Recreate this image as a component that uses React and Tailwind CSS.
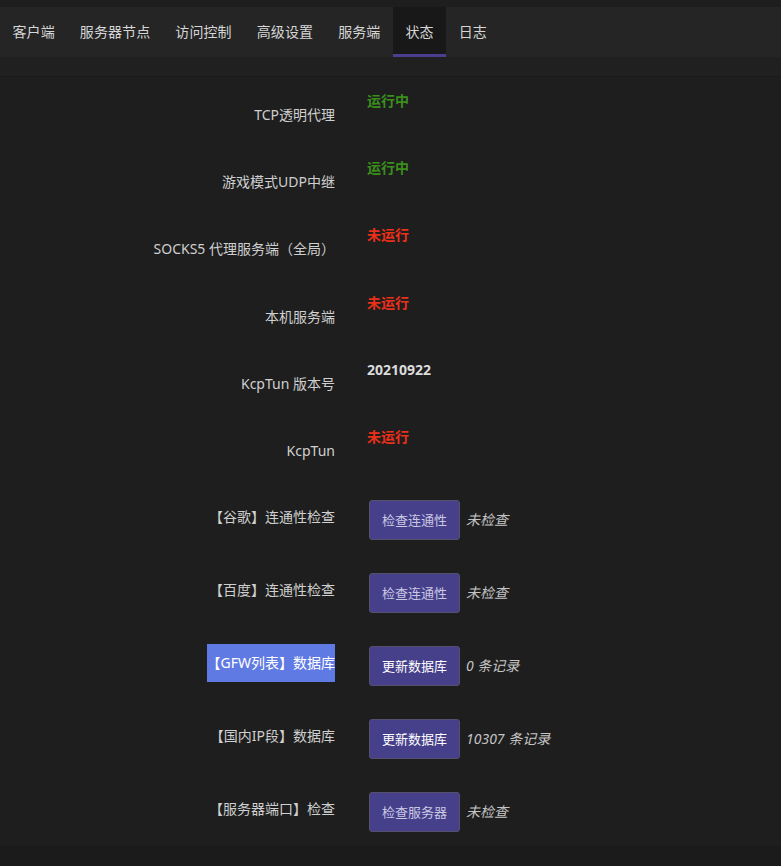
import React from 'react';

const tabs = ['客户端', '服务器节点', '访问控制', '高级设置', '服务端', '状态', '日志'];

const statusRows = [
  { label: 'TCP透明代理', value: '运行中', kind: 'ok' },
  { label: '游戏模式UDP中继', value: '运行中', kind: 'ok' },
  { label: 'SOCKS5 代理服务端（全局）', value: '未运行', kind: 'off' },
  { label: '本机服务端', value: '未运行', kind: 'off' },
  { label: 'KcpTun 版本号', value: '20210922', kind: 'plain' },
  { label: 'KcpTun', value: '未运行', kind: 'off' },
];

const actionRows = [
  { label: '【谷歌】连通性检查', btn: '检查连通性', note: '未检查' },
  { label: '【百度】连通性检查', btn: '检查连通性', note: '未检查' },
  { label: '【GFW列表】数据库', btn: '更新数据库', note: '0 条记录', bright: true, hl: true },
  { label: '【国内IP段】数据库', btn: '更新数据库', note: '10307 条记录', bright: true },
  { label: '【服务器端口】检查', btn: '检查服务器', note: '未检查' },
];

const statusColor = {
  ok: 'text-[#3a8f1b] font-bold',
  off: 'text-[#ea3019] font-bold',
  plain: 'text-[#dcdcdc] font-bold',
};

export default function App() {
  return (
    <div
      className="min-h-[866px] bg-[#1b1b1b] text-[14px] leading-5 text-[#cfcfcf]"
      style={{ fontFamily: '"Noto Sans", "Noto Sans CJK SC", sans-serif' }}
    >
      <div className="h-[7px] bg-[#1e1e1e]" />
      {/* tabs */}
      <div className="flex h-[50px] bg-[#252525]">
        {tabs.map((t) => (
          <div
            key={t}
            className={
              t === '状态'
                ? 'flex items-center px-[12.5px] tracking-[0.1px] bg-[#181818] border-b-[3px] border-[#4a3f8f] pt-[2px] text-[#d6d6d6]'
                : 'flex items-center px-[12.5px] tracking-[0.1px] pb-px text-[#d6d6d6]'
            }
          >
            {t}
          </div>
        ))}
      </div>
      <div className="h-[19px] bg-[#202020]" />
      <div className="h-px bg-[#1a1a1a]" />

      <div className="bg-[#1e1e1e] pt-[7px] h-[769px]">
        {statusRows.map((r) => (
          <div key={r.label} className="flex h-[67.2px]">
            <div className="w-[335px] text-right pt-[21px] text-[#cfcfcf]">{r.label}</div>
            <div className={`ml-[32px] pt-[7px] ${statusColor[r.kind]}`}>{r.value}</div>
          </div>
        ))}
        {actionRows.map((r) => (
          <div key={r.label} className="flex h-[73px]">
            <div className="w-[335px] text-right pt-[11px]">
              <span className={`inline-block py-[9px] ${r.hl ? 'bg-[#5f7ae2] text-white' : 'text-[#cfcfcf]'}`}>
                {r.label}
              </span>
            </div>
            <div className="ml-[34px] pt-[13px] flex items-center self-start gap-[6px]">
              <button
                className={`h-[40px] px-[12px] text-[13px] rounded-[3px] border border-[#55506e] bg-[#463f8a] ${
                  r.bright ? 'text-white' : 'text-[#c9c9e4]'
                }`}
              >
                {r.btn}
              </button>
              <span className="italic text-[#c4c4c4]">{r.note}</span>
            </div>
          </div>
        ))}
      </div>
    </div>
  );
}
